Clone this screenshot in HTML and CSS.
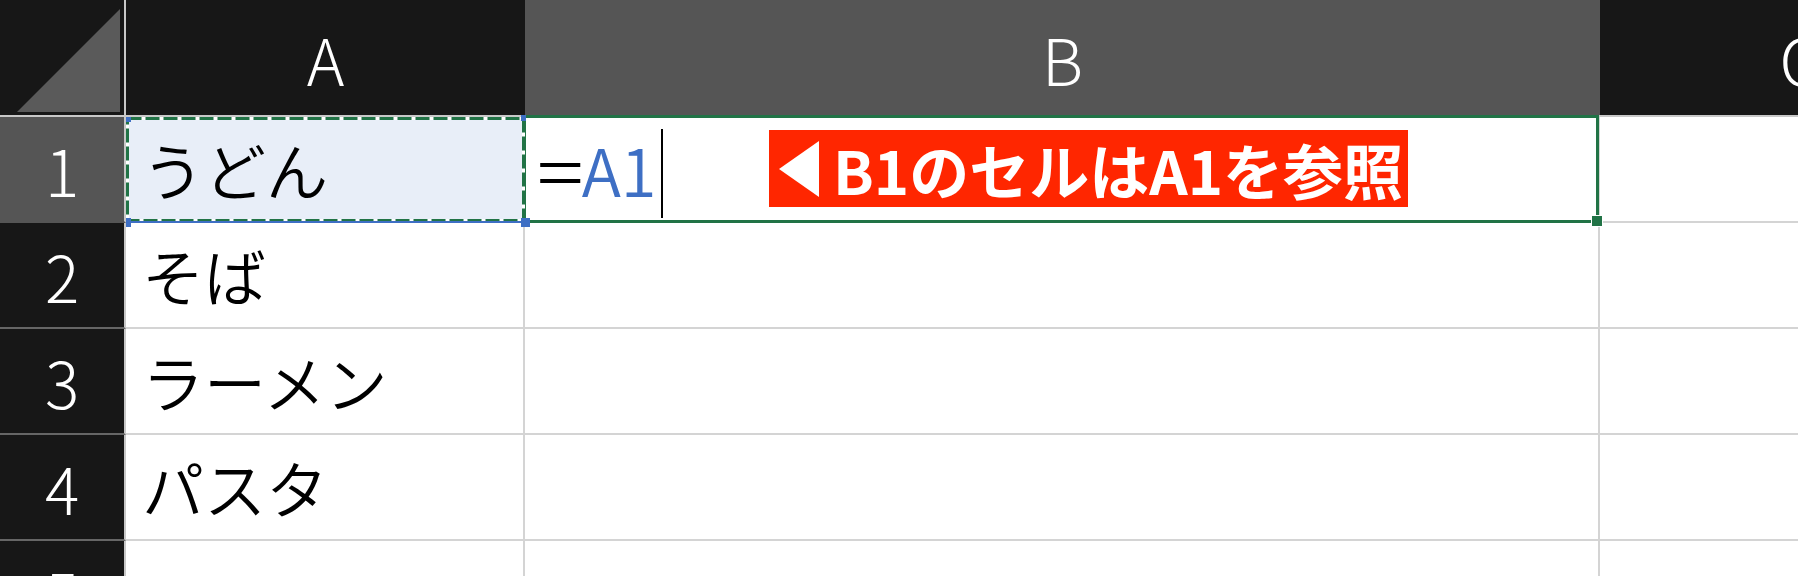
FILE: index.html
```html
<!DOCTYPE html>
<html lang="ja">
<head>
<meta charset="utf-8">
<title>セル参照</title>
<link rel="stylesheet" href="styles.css">
</head>
<body>
<div class="sheet">
  <div class="hdr corner">
    <svg class="corner-tri" width="124" height="115" viewBox="0 0 124 115"><polygon points="17,112 120,9 120,112" fill="#5a5a5a"/></svg>
  </div>
  <div class="hdr col">A</div>
  <div class="hdr col sel">B</div>
  <div class="hdr col">C</div>

  <div class="rh sel">1</div>
  <div class="cell a1">
    <span>うどん</span>
    <svg class="ants" width="399" height="106" viewBox="0 0 399 106">
      <rect x="1.5" y="1.5" width="396" height="102" fill="none" stroke="#ffffff" stroke-width="3"/>
      <rect x="1.5" y="1.5" width="396" height="102" fill="none" stroke="#217346" stroke-width="3" stroke-dasharray="14 4"/>
      <rect x="0" y="104" width="399" height="2" fill="#3e6fc4"/>
      <rect x="0" y="0" width="5" height="5" fill="#3e6fc4"/>
      <rect x="395" y="-2" width="5" height="6" fill="#3e6fc4"/>
      <rect x="0" y="101" width="5" height="9" fill="#3e6fc4"/>
      <rect x="395" y="101" width="9" height="9" fill="#3e6fc4"/>
    </svg>
  </div>
  <div class="cell b1">
    <span class="eq">=</span><span class="ref">A1</span><span class="caret"></span>
    <div class="note">
      <svg class="note-tri" width="40" height="56" viewBox="0 0 40 56"><polygon points="0,28 40,0 40,56" fill="#ffffff"/></svg>
      <span>B1のセルはA1を参照</span>
    </div>
    <div class="selbox"><i class="handle"></i></div>
  </div>
  <div class="cell"></div>

  <div class="rh">2</div>
  <div class="cell">そば</div>
  <div class="cell"></div>
  <div class="cell"></div>

  <div class="rh">3</div>
  <div class="cell">ラーメン</div>
  <div class="cell"></div>
  <div class="cell"></div>

  <div class="rh">4</div>
  <div class="cell">パスタ</div>
  <div class="cell"></div>
  <div class="cell"></div>

  <div class="rh">5</div>
  <div class="cell"></div>
  <div class="cell"></div>
  <div class="cell"></div>
</div>
</body>
</html>
```

FILE: styles.css
```css
html, body {
  margin: 0;
  padding: 0;
  background: #ffffff;
  overflow: hidden;
}

.sheet {
  display: grid;
  grid-template-columns: 126px 399px 1075px 399px;
  grid-template-rows: 117px repeat(5, 106px);
  width: 1999px;
  font-family: "Noto Sans CJK JP", "Noto Sans", sans-serif;
}

.hdr {
  background: #171717;
  color: #ffffff;
  border-bottom: 2px solid #c8c8c8;
  box-sizing: border-box;
  display: flex;
  align-items: center;
  justify-content: center;
  font-size: 64px;
  font-weight: 300;
  line-height: 1;
}

.hdr.sel {
  background: #555555;
}

.corner {
  border-right: 2px solid #c8c8c8;
  align-items: flex-start;
  justify-content: flex-start;
}

.corner-tri {
  display: block;
}

.rh {
  background: #171717;
  color: #ffffff;
  border-right: 2px solid #c8c8c8;
  border-bottom: 2px solid #666666;
  box-sizing: border-box;
  display: flex;
  align-items: center;
  justify-content: center;
  font-size: 64px;
  font-weight: 300;
  line-height: 1;
}

.rh.sel {
  background: #555555;
  border-bottom-color: #555555;
}

.cell {
  position: relative;
  box-sizing: border-box;
  border-right: 2px solid #d4d4d4;
  border-bottom: 2px solid #d4d4d4;
  display: flex;
  align-items: center;
  padding-left: 16px;
  font-size: 62px;
  font-weight: 350;
  color: #000000;
  line-height: 1;
  white-space: nowrap;
}

.a1 {
  background: #e8eef8;
  z-index: 3;
}

.ants {
  position: absolute;
  left: 0;
  top: 0;
  overflow: visible;
}

.b1 {
  padding-left: 12px;
  font-size: 65px;
  font-weight: 350;
  z-index: 2;
}

.eq {
  display: inline-block;
  color: #000000;
  transform: scaleX(1.3);
  transform-origin: left center;
  margin-right: 9px;
}

.ref {
  color: #3e6fc4;
}

.caret {
  display: inline-block;
  width: 2px;
  height: 89px;
  background: #000000;
  margin-left: 4px;
  margin-top: 9px;
}

.note {
  position: absolute;
  left: 244px;
  top: 13px;
  width: 639px;
  height: 77px;
  box-sizing: border-box;
  background: #ff2600;
  color: #ffffff;
  display: flex;
  align-items: center;
  padding-left: 10px;
  font-size: 60px;
  font-weight: 700;
  line-height: 1;
}

.note-tri {
  display: block;
  margin-right: 14px;
  flex: none;
}

.selbox {
  position: absolute;
  left: -2px;
  top: -2px;
  right: -1px;
  bottom: -2px;
  border: 3px solid #217346;
}

.handle {
  position: absolute;
  right: -6px;
  bottom: -6px;
  width: 10px;
  height: 10px;
  background: #217346;
  outline: 1px solid #ffffff;
}
```
